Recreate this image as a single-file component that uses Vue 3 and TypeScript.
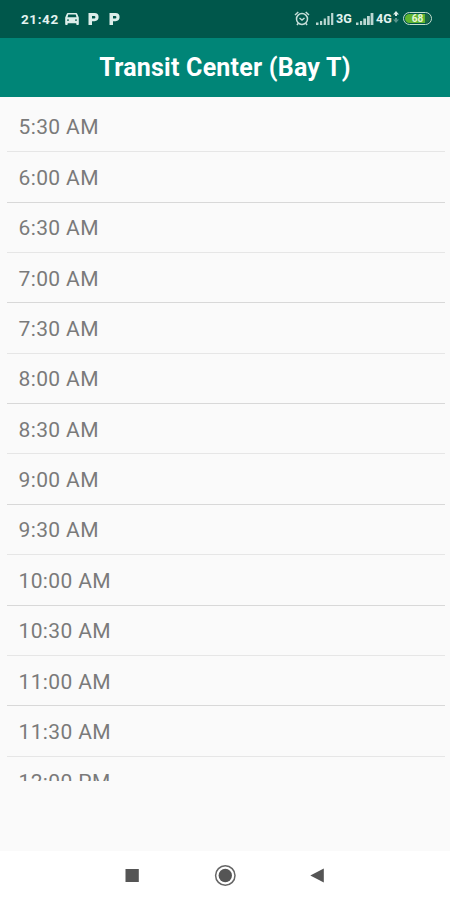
<script setup lang="ts">
const times: string[] = [
  '5:30 AM', '6:00 AM', '6:30 AM', '7:00 AM', '7:30 AM', '8:00 AM', '8:30 AM',
  '9:00 AM', '9:30 AM', '10:00 AM', '10:30 AM', '11:00 AM', '11:30 AM', '12:00 PM',
]
</script>

<template>
  <div class="screen">
    <header class="status">
      <div class="left">
        <span class="clock">21:42</span>
        <svg class="car" width="14" height="12" viewBox="0 0 14 12">
          <path fill-rule="evenodd" d="M3 0h8c.7 0 1.100.3 1.300.9L13.800 4.500v6.700c0 .5-.3.8-.8.8h-.9c-.5 0-.8-.3-.8-.8v-1H2.700v1c0 .5-.3.8-.8.8H1c-.5 0-.8-.3-.8-.8V4.500L1.700.9C1.900.3 2.300 0 3 0zM3.300 1.500 2.500 4.200h9l-.8-2.700zM3 6.200a.9.900 0 1 0 0 1.800.9.900 0 0 0 0-1.800zM11 6.200a.9.900 0 1 0 0 1.800.9.900 0 0 0 0-1.800z" />
        </svg>
        <svg v-for="n in 2" :key="n" class="park" width="11" height="12" viewBox="0 0 11 12">
          <path fill-rule="evenodd" d="M1 0h5.500a4.100 4.100 0 0 1 0 8.200H4V12H.5V0zM4 3v2.400h2.200a1.200 1.200 0 0 0 0-2.400z" />
        </svg>
      </div>
      <div class="right">
        <svg class="alarm" width="16" height="15" viewBox="0 0 16 15">
          <circle cx="8" cy="8" r="5.500" />
          <path d="M1 4 4.300 1M15 4l-3.300-3M5.500 7 8 9l2.500-2M4 12.500 3 14M12 12.500l1 1.500" />
        </svg>
        <svg class="signal first" width="18" height="12" viewBox="0 0 18 12">
          <path d="M0 9.500h2.500V12H0zM4 8h2.200v4H4zM7.700 5.500h2.200V12H7.700zM11.400 3h2.200v9h-2.200zM15.100 0h2.200v12h-2.200z" />
        </svg>
        <span class="net n3">3G</span>
        <svg class="signal second" width="18" height="12" viewBox="0 0 18 12">
          <path d="M0 9.500h2.500V12H0zM4 8h2.200v4H4zM7.300 5.500h2.800V12H7.300zM11 3h2.800v9H11zM14.600 0h2.800v12h-2.800z" />
        </svg>
        <span class="net n4">4G</span>
        <svg class="arrows" width="6" height="12" viewBox="0 0 6 12">
          <path d="M3 0 6 3.500H4V5H2V3.500H0z" />
          <path class="dim" d="M2 7h2v1.500h2L3 12 0 8.500h2z" />
        </svg>
        <span class="battery"><span class="charge">68</span></span>
      </div>
    </header>
    <div class="appbar"><h1>Transit Center (Bay T)</h1></div>
    <main class="list">
      <div v-for="t in times" :key="t" class="row"><span>{{ t }}</span></div>
    </main>
    <nav class="nav">
      <svg width="450" height="49" viewBox="0 0 450 49">
        <rect x="125.500" y="18" width="13.300" height="13" />
        <circle class="ring" cx="225.300" cy="24.500" r="9.700" />
        <circle cx="225.300" cy="24.500" r="6.700" />
        <path d="M310.300 24.500 323.800 17.500v14z" />
      </svg>
    </nav>
  </div>
</template>

<style>
body {
  margin: 0;
}
</style>

<style scoped>
.screen {
  width: 450px;
  height: 900px;
  display: flex;
  flex-direction: column;
  background: #fafafa;
  font-family: Roboto, sans-serif;
  overflow: hidden;
}
.status {
  height: 37.5px;
  flex: none;
  box-sizing: border-box;
  padding: 0 18px 0 21px;
  display: flex;
  justify-content: space-between;
  align-items: center;
  background: #00574b;
  color: #e3f3f0;
}
.left,
.right {
  display: flex;
  align-items: center;
}
.left svg,
.signal,
.arrows {
  fill: #dceeea;
}
.clock {
  font-size: 13.5px;
  font-weight: 700;
  letter-spacing: 0.6px;
  line-height: 16px;
}
.car {
  margin-left: 6px;
}
.park {
  margin-left: 9px;
}
.park + .park {
  margin-left: 10px;
}
.alarm {
  fill: none;
  stroke: #c5ded9;
  stroke-width: 1.5;
}
.first {
  margin-left: 5.5px;
}
.second {
  margin-left: 3.5px;
}
.signal {
  opacity: 0.85;
}
.net {
  width: 16px;
  font-size: 12.5px;
  font-weight: 700;
  line-height: 14px;
  margin-left: 2.5px;
}
.arrows {
  margin: -4px 0 0 1px;
}
.dim {
  opacity: 0.4;
}
.battery {
  box-sizing: border-box;
  width: 29px;
  height: 13px;
  margin-left: 4px;
  padding: 1px;
  display: flex;
  border: 1.5px solid #c6e0cf;
  border-radius: 7px;
}
.charge {
  flex: 1;
  border-radius: 5px;
  background: linear-gradient(90deg, #5fb52f 80%, #1b6845 80%);
  color: #e6f7d8;
  font-size: 10px;
  font-weight: 700;
  line-height: 9px;
  text-align: center;
}
.appbar {
  height: 59.3px;
  flex: none;
  display: flex;
  align-items: center;
  justify-content: center;
  background: #008577;
}
h1 {
  margin: 1px 0 0;
  font-size: 25px;
  font-weight: 700;
  line-height: 30px;
  letter-spacing: 0.22px;
  color: #fff;
  white-space: nowrap;
}
.list {
  height: 684.2px;
  flex: none;
  box-sizing: border-box;
  padding: 5px 5px 0 7px;
  overflow: hidden;
}
.row {
  height: 50.38px;
  box-sizing: border-box;
  padding: 2px 0 0 11.5px;
  display: flex;
  align-items: center;
  border-bottom: 1px solid #e6e6e6;
  color: #7a7a7a;
  font-size: 21px;
  line-height: 26px;
  letter-spacing: 0.38px;
}
.row:nth-child(even) {
  border-bottom-color: #d8d8d8;
}
.nav {
  height: 49px;
  margin-top: auto;
  background: #fff;
}
.nav svg {
  display: block;
  fill: #555;
}
.nav .ring {
  fill: none;
  stroke: #666;
  stroke-width: 1.5;
}
</style>
